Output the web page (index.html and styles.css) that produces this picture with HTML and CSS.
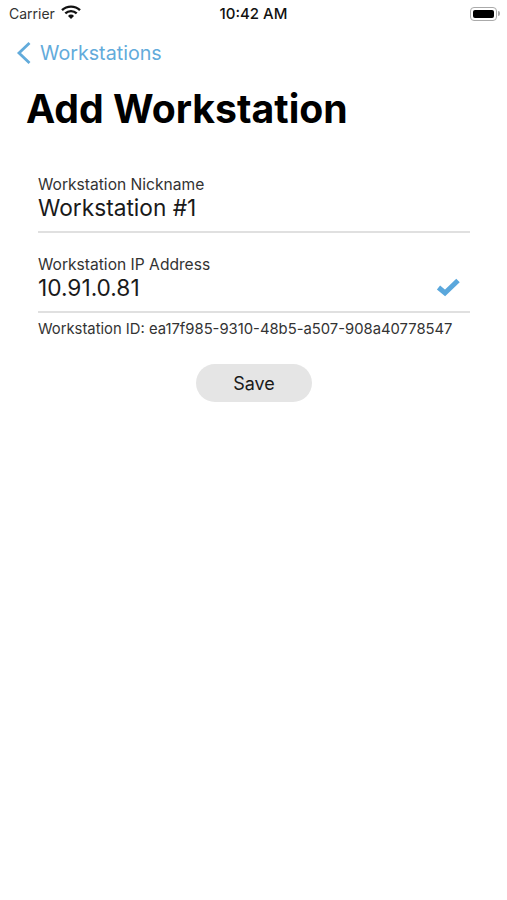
FILE: index.html
```html
<!DOCTYPE html>
<html lang="en">
<head>
    <meta charset="UTF-8">
    <meta name="viewport" content="width=device-width, initial-scale=1.0">
    <title>Add Workstation</title>
    <link rel="stylesheet" href="styles.css">
</head>
<body>

    <div class="status-bar">
        <div class="status-left">
            <span class="carrier">Carrier</span>
            <svg class="wifi" width="20" height="15" viewBox="0 0 20 15">
                <path d="M1 5.2a13 13 0 0 1 18 0" fill="none" stroke="#111" stroke-width="2.4"/>
                <path d="M4.3 8.4a8.4 8.4 0 0 1 11.4 0" fill="none" stroke="#111" stroke-width="2.4"/>
                <path d="M7 10.9a3.9 3.9 0 0 1 6 0L10 14z" fill="#111"/>
            </svg>
        </div>
        <div class="clock">10:42 AM</div>
        <div class="status-right">
            <div class="battery"><div class="battery-fill"></div></div>
            <div class="battery-tip"></div>
        </div>
    </div>

    <div class="nav-bar">
        <svg class="chevron" width="16" height="24" viewBox="0 0 16 24">
            <path d="M13.5 2 3 12 13.5 22" fill="none" stroke="#62abdb" stroke-width="2.8"/>
        </svg>
        <span class="back-label">Workstations</span>
    </div>

    <h1 class="title">Add Workstation</h1>

    <div class="form">
        <div class="field">
            <div class="field-label">Workstation Nickname</div>
            <div class="field-row">
                <span class="field-value">Workstation #1</span>
            </div>
        </div>
        <div class="field">
            <div class="field-label">Workstation IP Address</div>
            <div class="field-row">
                <span class="field-value">10.91.0.81</span>
                <svg class="check" width="25" height="20" viewBox="0 0 25 20">
                    <path d="M2.5 10.5 9 16 22 3.5" fill="none" stroke="#5aa7dc" stroke-width="5"/>
                </svg>
            </div>
        </div>
        <div class="workstation-id">Workstation ID: ea17f985-9310-48b5-a507-908a40778547</div>
        <button class="save-btn">Save</button>
    </div>

</body>
</html>
```

FILE: styles.css
```css
body {
    margin: 0;
    background-color: #fff;
    font-family: Inter, "Liberation Sans", sans-serif;
    color: #111;
}

.status-bar {
    display: flex;
    align-items: center;
    justify-content: space-between;
    height: 27px;
    padding: 0 7px 0 9px;
    position: relative;
}

.status-left {
    display: flex;
    align-items: center;
    gap: 6px;
}

.carrier {
    font-size: 14px;
    color: #333;
}

.wifi {
    margin-top: -3px;
}

.clock {
    position: absolute;
    left: 0;
    right: 0;
    text-align: center;
    font-size: 15px;
    font-weight: 500;
}

.status-right {
    display: flex;
    align-items: center;
    gap: 1px;
}

.battery {
    width: 27px;
    height: 14px;
    padding: 2px;
    border: 1.5px solid #aaa;
    border-radius: 4px;
    box-sizing: border-box;
}

.battery-fill {
    height: 100%;
    background-color: #000;
    border-radius: 2px;
}

.battery-tip {
    width: 2px;
    height: 5px;
    background-color: #aaa;
    border-radius: 0 2px 2px 0;
}

.nav-bar {
    display: flex;
    align-items: center;
    gap: 8px;
    height: 52px;
    padding-left: 16px;
}

.back-label {
    font-size: 19.7px;
    color: #62abdb;
}

.title {
    margin: 5px 0 0 26px;
    font-size: 39.2px;
    line-height: 50px;
    font-weight: 700;
    color: #000;
}

.form {
    display: flex;
    flex-direction: column;
    padding: 0 37px 0 38px;
    margin-top: 27px;
}

.field {
    padding-top: 15px;
    padding-bottom: 11px;
    border-bottom: 2px solid #e0e0e0;
    margin-bottom: 8px;
}

.field + .field {
    margin-bottom: 0;
}

.field-label {
    font-size: 15.6px;
    line-height: 18px;
    color: #333;
}

.field-row {
    display: flex;
    align-items: center;
    justify-content: space-between;
    height: 26px;
}

.field-value {
    font-size: 22.7px;
    color: #1a1a1a;
}

.check {
    margin-right: 9px;
}

.workstation-id {
    margin-top: 6px;
    font-size: 14.8px;
    line-height: 20px;
    color: #333;
}

.save-btn {
    align-self: center;
    width: 116px;
    height: 38px;
    margin-top: 25px;
    border: none;
    border-radius: 19px;
    background-color: #e5e5e5;
    font-family: inherit;
    font-size: 18px;
    color: #1a1a1a;
}
```
